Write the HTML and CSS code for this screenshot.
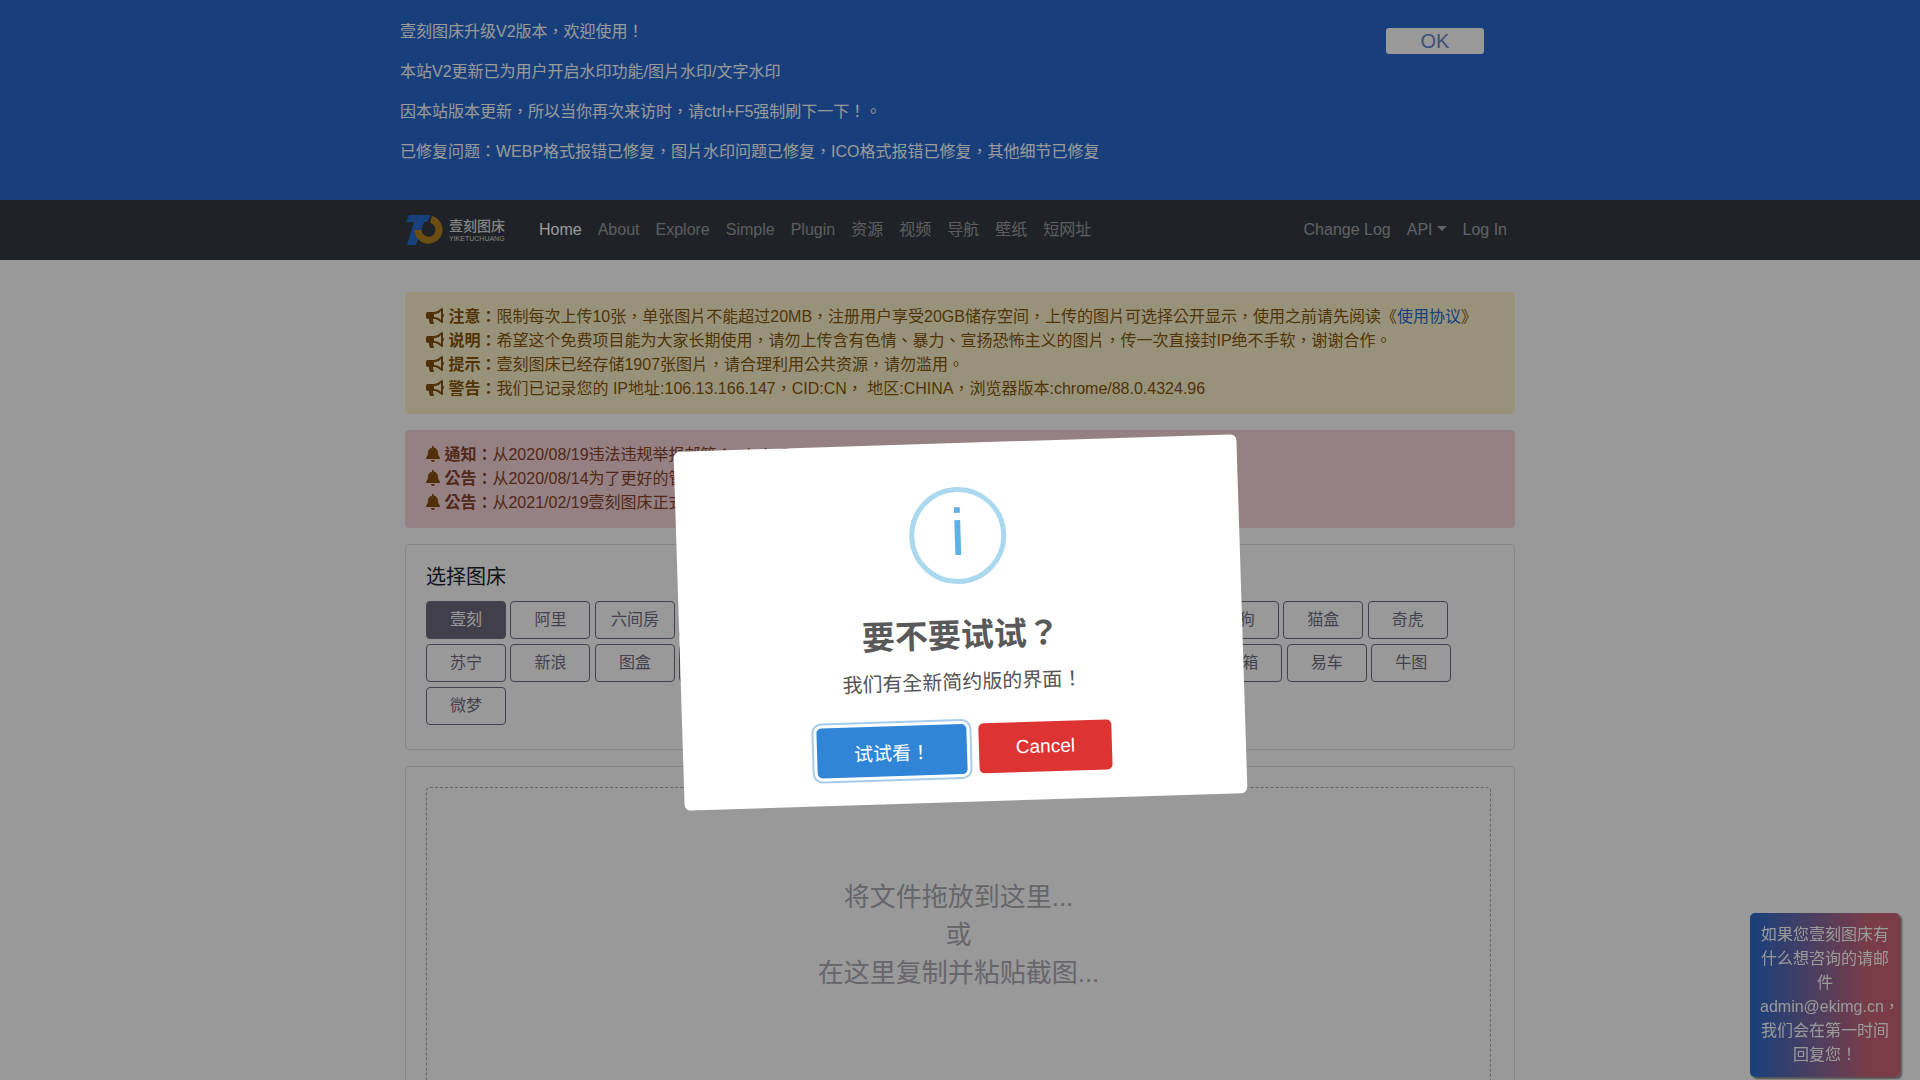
FILE: index.html
```html
<!DOCTYPE html>
<html lang="zh-CN">
<head>
<meta charset="utf-8">
<meta name="viewport" content="width=device-width, initial-scale=1">
<title>壹刻图床</title>
<link rel="stylesheet" href="styles.css">
</head>
<body>
<svg class="sprite" aria-hidden="true">
  <symbol id="bullhorn" viewBox="0 0 576 512"><path d="M576 240c0-23.630-12.950-44.040-32-55.120V32.010C544 23.260 537.020 0 512 0c-7.120 0-14.190 2.380-19.980 7.020l-85.030 68.030C364.280 109.190 310.660 128 256 128H64c-35.350 0-64 28.650-64 64v96c0 35.350 28.650 64 64 64h33.700c-1.390 10.480-2.180 21.140-2.180 32 0 39.770 9.260 77.350 25.560 110.940 5.190 10.690 16.520 17.060 28.400 17.060h74.280c26.050 0 41.690-29.840 25.900-50.560-16.400-21.520-26.150-48.360-26.150-77.440 0-11.110 1.620-21.790 4.410-32H256c54.660 0 108.280 18.810 150.980 52.950l85.030 68.030a32.023 32.023 0 0 0 19.980 7.020c24.920 0 32-22.780 32-32V295.130C563.050 284.040 576 263.630 576 240zm-96 141.420l-33.050-26.440C392.950 311.780 325.120 288 256 288v-96c69.120 0 136.950-23.780 190.950-66.980L480 98.580v282.840z"/></symbol>
  <symbol id="bell" viewBox="0 0 448 512"><path d="M224 512c35.320 0 63.970-28.650 63.970-64H160.030c0 35.350 28.650 64 63.970 64zm215.390-149.710c-19.320-20.760-55.470-51.990-55.470-154.290 0-77.700-54.480-139.900-127.940-155.160V32c0-17.670-14.320-32-31.980-32s-31.980 14.330-31.980 32v20.840C118.560 68.100 64.080 130.300 64.080 208c0 102.300-36.150 133.530-55.470 154.290-6 6.450-8.660 14.160-8.610 21.710.11 16.400 12.980 32 32.100 32h383.800c19.120 0 32-15.600 32.100-32 .05-7.550-2.610-15.270-8.610-21.710z"/></symbol>
</svg>

<section class="notice-bar">
  <div class="notice-inner">
    <div class="notice-text">
      <p>壹刻图床升级V2版本，欢迎使用！</p>
      <p>本站V2更新已为用户开启水印功能/图片水印/文字水印</p>
      <p>因本站版本更新，所以当你再次来访时，请ctrl+F5强制刷下一下！。</p>
      <p>已修复问题：WEBP格式报错已修复，图片水印问题已修复，ICO格式报错已修复，其他细节已修复</p>
    </div>
    <button class="notice-ok" type="button">OK</button>
  </div>
</section>

<nav class="navbar">
  <div class="navbar-inner">
    <a class="brand" href="#" aria-label="壹刻图床">
      <svg class="brand-mark" viewBox="0 0 40 30" aria-hidden="true">
        <path fill="#286bcf" d="M4 0H26L22 7H19L11 30H2L9 7H1z"/>
        <path fill="none" stroke="#b5831f" stroke-width="7" d="M26 4.500A10.500 10.500 0 1 1 13 15"/>
      </svg>
      <span class="brand-text"><span class="brand-name">壹刻图床</span><span class="brand-sub">YIKETUCHUANG</span></span>
    </a>
    <ul class="nav">
      <li><a class="active" href="#">Home</a></li>
      <li><a href="#">About</a></li>
      <li><a href="#">Explore</a></li>
      <li><a href="#">Simple</a></li>
      <li><a href="#">Plugin</a></li>
      <li><a href="#">资源</a></li>
      <li><a href="#">视频</a></li>
      <li><a href="#">导航</a></li>
      <li><a href="#">壁纸</a></li>
      <li><a href="#">短网址</a></li>
    </ul>
    <ul class="nav nav-right">
      <li><a href="#">Change Log</a></li>
      <li><a class="dropdown" href="#">API</a></li>
      <li><a href="#">Log In</a></li>
    </ul>
  </div>
</nav>

<main class="container">
  <div class="alert alert-warning">
    <div><svg class="icon-horn"><use href="#bullhorn"/></svg> <b>注意：</b>限制每次上传10张，单张图片不能超过20MB，注册用户享受20GB储存空间，上传的图片可选择公开显示，使用之前请先阅读《<a href="#">使用协议</a>》</div>
    <div><svg class="icon-horn"><use href="#bullhorn"/></svg> <b>说明：</b>希望这个免费项目能为大家长期使用，请勿上传含有色情、暴力、宣扬恐怖主义的图片，传一次直接封IP绝不手软，谢谢合作。</div>
    <div><svg class="icon-horn"><use href="#bullhorn"/></svg> <b>提示：</b>壹刻图床已经存储1907张图片，请合理利用公共资源，请勿滥用。</div>
    <div><svg class="icon-horn"><use href="#bullhorn"/></svg> <b>警告：</b>我们已记录您的 IP地址:106.13.166.147，CID:CN， 地区:CHINA，浏览器版本:chrome/88.0.4324.96</div>
  </div>

  <div class="alert alert-danger">
    <div><svg class="icon-bell"><use href="#bell"/></svg> <b>通知：</b>从2020/08/19违法违规举报邮箱：admin@ekimg.cn</div>
    <div><svg class="icon-bell"><use href="#bell"/></svg> <b>公告：</b>从2020/08/14为了更好的管理图片</div>
    <div><svg class="icon-bell"><use href="#bell"/></svg> <b>公告：</b>从2021/02/19壹刻图床正式升级</div>
  </div>

  <section class="card">
    <h5>选择图床</h5>
    <div class="hosts">
      <button type="button" class="host selected">壹刻</button>
      <button type="button" class="host">阿里</button>
      <button type="button" class="host">六间房</button>
      <button type="button" class="host">京东</button>
      <button type="button" class="host">头条</button>
      <button type="button" class="host">Upload图</button>
      <button type="button" class="host">搜狐</button>
      <button type="button" class="host">网易</button>
      <button type="button" class="host">百度</button>
      <button type="button" class="host">搜狗</button>
      <button type="button" class="host">猫盒</button>
      <button type="button" class="host">奇虎</button>
      <button type="button" class="host">苏宁</button>
      <button type="button" class="host">新浪</button>
      <button type="button" class="host">图盒</button>
      <button type="button" class="host">小米</button>
      <button type="button" class="host">掘金</button>
      <button type="button" class="host">Gitee图床</button>
      <button type="button" class="host">携程</button>
      <button type="button" class="host">葫芦</button>
      <button type="button" class="host">美图</button>
      <button type="button" class="host">邮箱</button>
      <button type="button" class="host">易车</button>
      <button type="button" class="host">牛图</button>
      <button type="button" class="host">微梦</button>
    </div>
  </section>

  <section class="card">
    <div class="dropzone">将文件拖放到这里...<br>或<br>在这里复制并粘贴截图...</div>
  </section>
</main>

<aside class="contact">如果您壹刻图床有什么想咨询的请邮件admin@ekimg.cn，我们会在第一时间回复您！</aside>

<div class="overlay">
  <div class="modal" role="dialog" aria-labelledby="modal-title">
    <div class="modal-icon" aria-hidden="true">i</div>
    <h2 id="modal-title">要不要试试？</h2>
    <p>我们有全新简约版的界面！</p>
    <div class="modal-actions">
      <button type="button" class="confirm">试试看！</button>
      <button type="button" class="cancel">Cancel</button>
    </div>
  </div>
</div>
</body>
</html>
```
FILE: styles.css
```css
* { box-sizing: border-box; }

body {
  margin: 0;
  height: 100vh;
  overflow: hidden;
  background: #fff;
  color: #212529;
  font: 16px/24px "Liberation Sans", "Noto Sans CJK TC", "Noto Sans CJK SC", sans-serif;
  font-feature-settings: "locl" 0;
}

button { font-family: inherit; font-feature-settings: inherit; }
a { color: #286bcf; text-decoration: none; }
.sprite { display: none; }

/* Top notice */
.notice-bar {
  background: #286acf;
  color: #fff;
  padding: 20px 0;
}
.notice-inner {
  display: flex;
  justify-content: space-between;
  align-items: flex-start;
  max-width: 1120px;
  margin: 0 auto;
}
.notice-text p { margin: 0 0 16px; }
.notice-ok {
  width: 98px;
  height: 26px;
  margin: 8px 36px 0 0;
  padding: 0;
  border: 0;
  border-radius: 3px;
  background: #fff;
  color: #6487cd;
  font-size: 20px;
  line-height: 26px;
}

/* Navigation */
.navbar { background: #343a40; }
.navbar-inner {
  display: flex;
  align-items: center;
  max-width: 1110px;
  height: 60px;
  margin: 0 auto;
}
.brand {
  display: flex;
  align-items: center;
  gap: 4px;
  width: 126px;
}
.brand-mark { width: 40px; height: 30px; }
.brand-text { display: flex; flex-direction: column; color: #ddd; }
.brand-name { font-size: 14px; font-weight: 500; line-height: 18px; }
.brand-sub { font-size: 7px; line-height: 8px; white-space: nowrap; }
.nav {
  display: flex;
  margin: 0;
  padding: 0;
  list-style: none;
}
.nav-right { margin-left: auto; }
.nav a {
  display: block;
  padding: 8px;
  color: rgba(255, 255, 255, .5);
}
.nav-right a { color: rgba(255, 255, 255, .55); }
.nav a.active { color: #fff; }
.dropdown::after {
  content: "";
  display: inline-block;
  margin-left: 4px;
  vertical-align: 4px;
  border: 5px solid transparent;
  border-top-color: currentColor;
  border-bottom: 0;
}

/* Content */
.container {
  max-width: 1110px;
  margin: 32px auto 0;
}
.alert {
  margin-bottom: 16px;
  padding: 12px 20px;
  border: 1px solid;
  border-radius: 4px;
}
.alert-warning { background: #fff3cd; border-color: #fff3cd; color: #85580c; }
.alert-danger { background: #f8d7da; border-color: #f8d7da; color: #87442c; }
.icon-horn, .icon-bell {
  height: 16px;
  vertical-align: -2px;
  fill: #855010;
}
.icon-horn { width: 18px; }
.icon-bell { width: 14px; }

.card {
  margin-bottom: 16px;
  padding: 20px 20px 19px;
  border: 1px solid #dfdfdf;
  border-radius: 4px;
}
.card h5 {
  margin: 0 0 12px;
  font-size: 20px;
  font-weight: 400;
  line-height: 24px;
}
.host {
  min-width: 80px;
  height: 38px;
  margin-bottom: 5px;
  padding: 0 12px;
  border: 1px solid #716f82;
  border-radius: 4px;
  background: transparent;
  color: #716f82;
  font-size: 16px;
  line-height: 24px;
  vertical-align: top;
}
.host.selected { background: #6c6a7d; color: #fff; }

.dropzone {
  min-height: 400px;
  margin-right: 3px;
  padding: 90px 0;
  border: 1px dashed #aaa;
  border-radius: 4px;
  color: #aaaab2;
  font-size: 26px;
  line-height: 38px;
  text-align: center;
}

.contact {
  position: fixed;
  right: 20px;
  bottom: 3px;
  width: 150px;
  padding: 10px;
  border-radius: 5px;
  background: linear-gradient(to right, #286bcf, #cc6677 80%);
  box-shadow: 2px 2px 2px #888;
  color: #fff;
  text-align: center;
}

/* Dialog */
.overlay {
  position: fixed;
  inset: 0;
  display: flex;
  align-items: center;
  justify-content: center;
  padding-top: 165px;
  background: rgba(0, 0, 0, .4);
}
.modal {
  display: flex;
  flex-direction: column;
  align-items: center;
  width: 563px;
  padding: 44px 22px 28px;
  border-radius: 6px;
  background: #fff;
  transform: rotate(-1.8deg);
}
.modal-icon {
  width: 97px;
  height: 97px;
  margin-bottom: 32px;
  border: 5px solid #a9d8ef;
  border-radius: 50%;
  color: #5eb1e6;
  font-size: 66px;
  line-height: 80px;
  text-align: center;
}
.modal h2 {
  margin: 0;
  color: #595959;
  font-size: 33px;
  line-height: 40px;
}
.modal p {
  margin: 12px 0 28px;
  color: #545454;
  font-size: 20px;
  line-height: 28px;
}
.modal-actions { display: flex; gap: 12px; }
.modal-actions button {
  height: 50px;
  padding: 0 37px;
  border: 0;
  border-radius: 5px;
  color: #fff;
  font-size: 19px;
}
.modal-actions .confirm {
  background: #3085d6;
  box-shadow: 0 0 0 3px #fff, 0 0 0 5px #a5cdeb;
}
.modal-actions .cancel { background: #dd3333; }
```
